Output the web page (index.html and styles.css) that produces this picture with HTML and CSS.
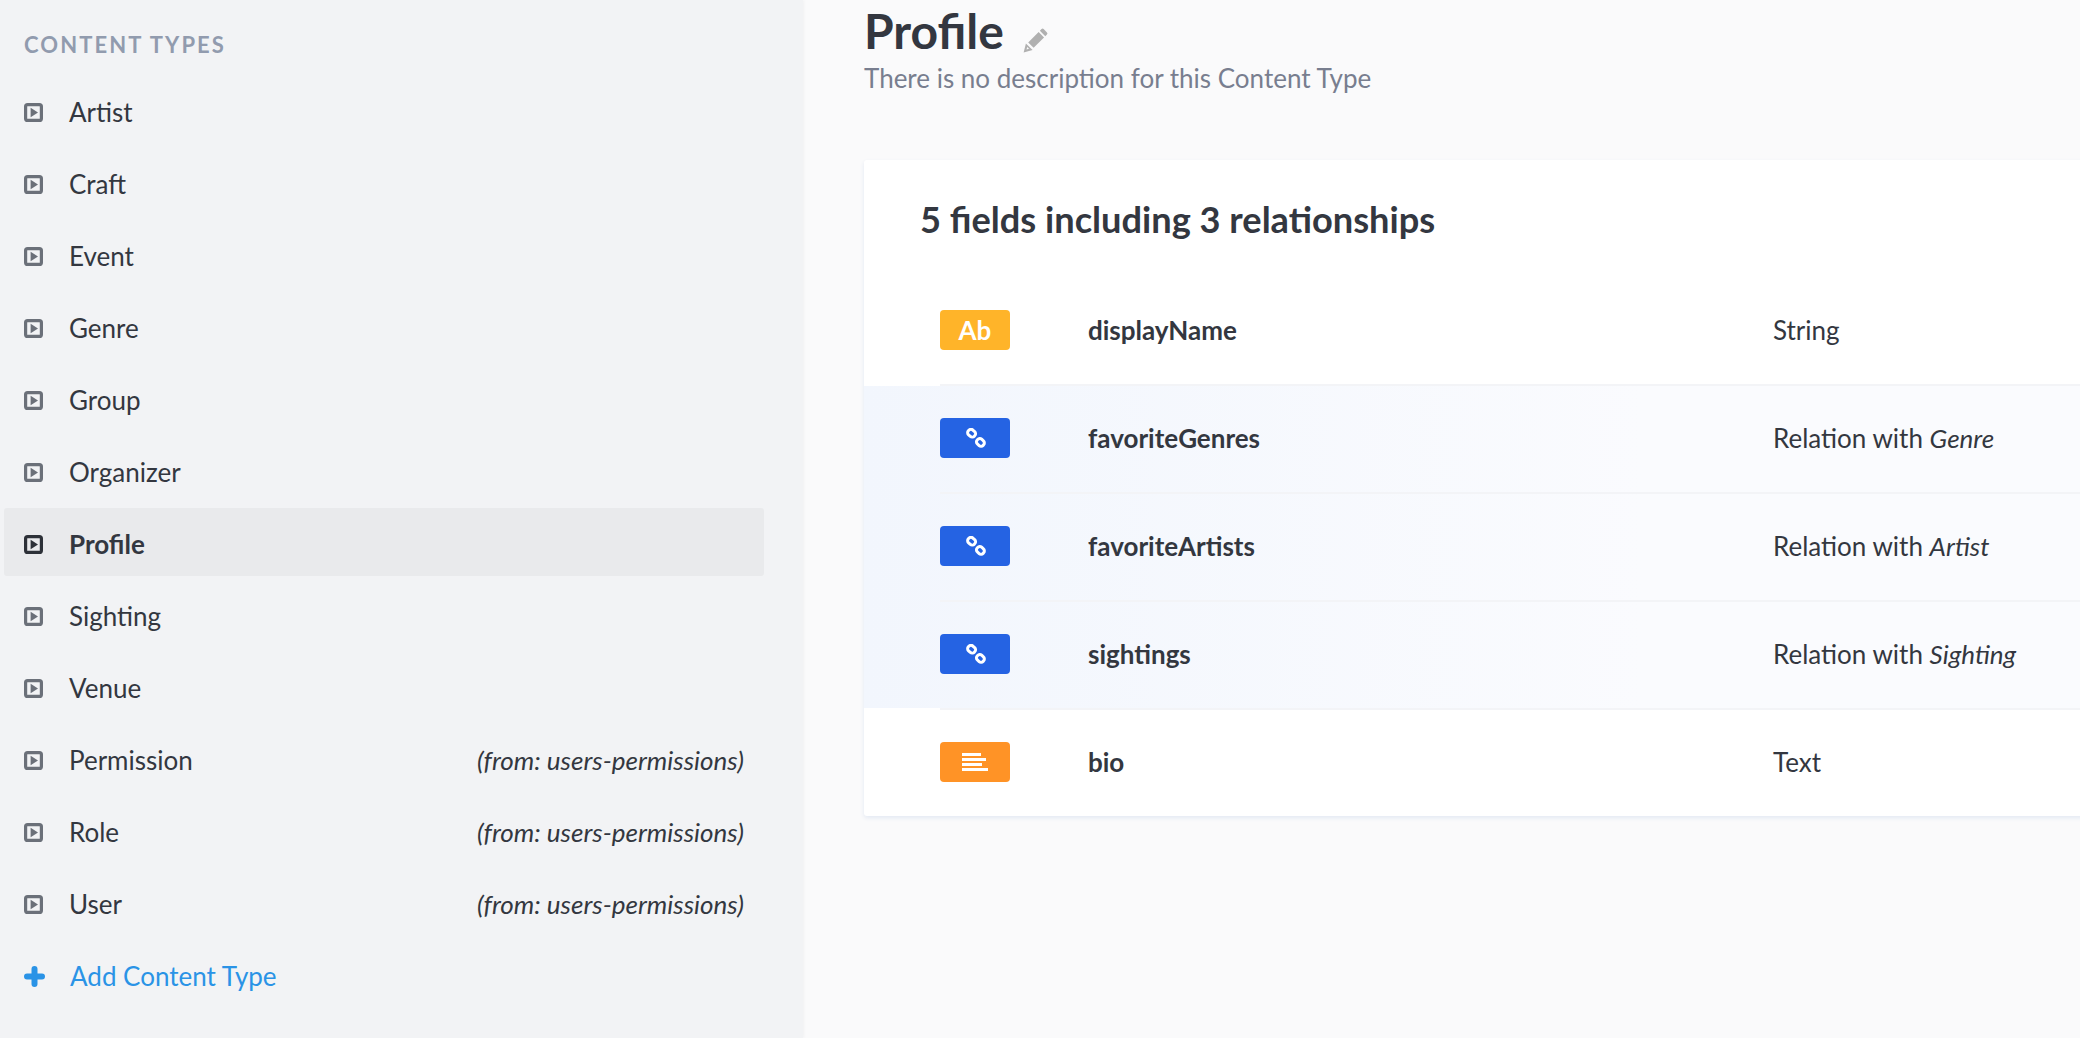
FILE: index.html
```html
<!DOCTYPE html>
<html lang="en">
<head>
    <meta charset="UTF-8">
    <title>Content Types - Profile</title>
    <link rel="stylesheet" href="styles.css">
</head>
<body>
    <svg class="sprites" width="0" height="0">
        <symbol id="ico-type" viewBox="0 0 19 19">
            <rect x="1.6" y="1.6" width="15.8" height="15.8" rx="2" fill="none" stroke="currentColor" stroke-width="3.2"/>
            <path d="M6.6 4.8 L14 9.5 L6.6 14.2 Z" fill="currentColor"/>
        </symbol>
        <symbol id="ico-link" viewBox="0 0 20 20">
            <g fill="none" stroke="#fff" stroke-width="3">
                <rect x="1.6" y="2" width="8" height="6.4" rx="2.8" transform="rotate(42 5.6 5.2)"/>
                <rect x="10.4" y="11.2" width="8" height="6.4" rx="2.8" transform="rotate(42 14.4 14.4)"/>
            </g>
        </symbol>
    </svg>

    <aside class="sidebar">
        <h2 class="sidebar-title">CONTENT TYPES</h2>
        <ul class="type-list">
            <li class="type-item"><svg class="type-ico"><use href="#ico-type"/></svg><span>Artist</span></li>
            <li class="type-item"><svg class="type-ico"><use href="#ico-type"/></svg><span>Craft</span></li>
            <li class="type-item"><svg class="type-ico"><use href="#ico-type"/></svg><span>Event</span></li>
            <li class="type-item"><svg class="type-ico"><use href="#ico-type"/></svg><span>Genre</span></li>
            <li class="type-item"><svg class="type-ico"><use href="#ico-type"/></svg><span>Group</span></li>
            <li class="type-item"><svg class="type-ico"><use href="#ico-type"/></svg><span>Organizer</span></li>
            <li class="type-item active"><svg class="type-ico"><use href="#ico-type"/></svg><span>Profile</span></li>
            <li class="type-item"><svg class="type-ico"><use href="#ico-type"/></svg><span>Sighting</span></li>
            <li class="type-item"><svg class="type-ico"><use href="#ico-type"/></svg><span>Venue</span></li>
            <li class="type-item"><svg class="type-ico"><use href="#ico-type"/></svg><span>Permission</span><em>(from: users-permissions)</em></li>
            <li class="type-item"><svg class="type-ico"><use href="#ico-type"/></svg><span>Role</span><em>(from: users-permissions)</em></li>
            <li class="type-item"><svg class="type-ico"><use href="#ico-type"/></svg><span>User</span><em>(from: users-permissions)</em></li>
            <li class="type-item add-item">
                <svg class="add-ico" viewBox="0 0 21 21"><path d="M10.5 3 V18 M3 10.5 H18" stroke="currentColor" stroke-width="6" stroke-linecap="round" fill="none"/></svg>
                <span>Add Content Type</span>
            </li>
        </ul>
    </aside>

    <main class="main">
        <div class="page-head">
            <h1>Profile
                <svg class="edit-ico" viewBox="0 0 24 24">
                    <path d="M5 13.8 L15 3.8 L20.2 9 L10.2 19 Z M16.2 2.6 L17.8 1 Q18.8 0 19.8 1 L23 4.2 Q24 5.2 23 6.2 L21.4 7.8 Z" fill="#b0b0b0"/>
                    <path d="M0.6 23.4 L2.8 14.8 L9.2 21.2 Z M3.4 20.6 L5.8 20 L4 18.2 Z" fill="#b0b0b0" fill-rule="evenodd"/>
                </svg>
            </h1>
            <p>There is no description for this Content Type</p>
        </div>

        <section class="card">
            <h3>5 fields including 3 relationships</h3>

            <div class="field-row">
                <div class="badge badge-string">Ab</div>
                <div class="field-name">displayName</div>
                <div class="field-type">String</div>
            </div>
            <div class="field-row relation">
                <div class="badge badge-relation"><svg class="link-ico"><use href="#ico-link"/></svg></div>
                <div class="field-name">favoriteGenres</div>
                <div class="field-type">Relation with <em>Genre</em></div>
            </div>
            <div class="field-row relation">
                <div class="badge badge-relation"><svg class="link-ico"><use href="#ico-link"/></svg></div>
                <div class="field-name">favoriteArtists</div>
                <div class="field-type">Relation with <em>Artist</em></div>
            </div>
            <div class="field-row relation">
                <div class="badge badge-relation"><svg class="link-ico"><use href="#ico-link"/></svg></div>
                <div class="field-name">sightings</div>
                <div class="field-type">Relation with <em>Sighting</em></div>
            </div>
            <div class="field-row">
                <div class="badge badge-text">
                    <div class="text-lines"><i class="l1"></i><i class="l2"></i><i class="l3"></i><i class="l4"></i></div>
                </div>
                <div class="field-name">bio</div>
                <div class="field-type">Text</div>
            </div>
        </section>
    </main>
</body>
</html>
```

FILE: styles.css
```css
* {
    box-sizing: border-box;
}

html, body {
    height: 100%;
}

body {
    margin: 0;
    display: flex;
    overflow: hidden;
    font-family: Lato, 'Open Sans', sans-serif;
    color: #333740;
    background: #fafafb;
}

.sprites {
    position: absolute;
}

/* Sidebar */
.sidebar {
    flex: 0 0 803px;
    padding: 33px 39px 0 4px;
    background: #f2f3f5;
    box-shadow: 1px 0 3px rgba(0,0,0,0.04);
}

.sidebar-title {
    margin: 0 0 19px 20px;
    font-size: 22px;
    line-height: 24px;
    font-weight: 700;
    letter-spacing: 2.1px;
    color: #919bae;
}

.type-list {
    margin: 0;
    padding: 0;
    list-style: none;
}

.type-item {
    display: flex;
    align-items: center;
    height: 68px;
    margin-bottom: 4px;
    padding: 4px 20px 0;
    border-radius: 3px;
    font-size: 26px;
    color: #333740;
}

.type-item span {
    flex: 1;
}

.type-item em {
    font-size: 26px;
}

.type-item.active {
    background: #e9eaec;
    font-weight: 700;
}

.type-ico {
    width: 19px;
    height: 19px;
    margin-right: 26px;
    color: #6b7079;
}

.active .type-ico {
    color: #2d3138;
}

.add-item {
    color: #2a93e6;
}

.add-ico {
    width: 21px;
    height: 21px;
    margin-right: 25px;
}

/* Main column */
.main {
    flex: 1;
    min-width: 0;
    padding: 0 0 0 61px;
}

.page-head {
    height: 160px;
    padding-top: 3px;
}

.page-head h1 {
    margin: 0;
    font-size: 48px;
    line-height: 55px;
    font-weight: 700;
}

.edit-ico {
    width: 25px;
    height: 25px;
    margin-left: 7px;
    vertical-align: -4px;
}

.page-head p {
    margin: 4px 0 0;
    font-size: 26px;
    line-height: 32px;
    color: #787e8f;
}

.card {
    width: 1300px;
    height: 656px;
    background: #fff;
    border-radius: 3px 0 0 3px;
    box-shadow: 0 2px 4px #e3e9f3;
}

.card h3 {
    margin: 0;
    height: 116px;
    padding: 0 0 0 56px;
    font-size: 36.2px;
    line-height: 118px;
    font-weight: 700;
}

.field-row {
    display: flex;
    align-items: center;
    height: 108px;
    padding-left: 76px;
    font-size: 26px;
    position: relative;
}

.field-row.relation {
    background: linear-gradient(90deg, #f2f6fd 0%, #fafbfe 60%);
}

/* divider sits on top of the next row and starts at the badge */
.field-row::after {
    content: "";
    position: absolute;
    left: 76px;
    right: 0;
    bottom: -2px;
    height: 2px;
    background: #f3f4f7;
    z-index: 1;
}

.field-row:first-of-type::before {
    content: "";
    position: absolute;
    left: 0;
    bottom: -2px;
    width: 76px;
    height: 2px;
    background: #fff;
    z-index: 1;
}

.field-row:last-child::after {
    display: none;
}

.badge {
    display: flex;
    align-items: center;
    justify-content: center;
    flex: 0 0 70px;
    height: 40px;
    margin-right: 78px;
    border-radius: 4px;
    color: #fff;
    font-size: 26px;
    font-weight: 700;
}

.badge-string {
    background: #ffb429;
}

.badge-relation {
    background: #2563e3;
}

.badge-text {
    background: #ff9326;
}

.link-ico {
    width: 20px;
    height: 20px;
    margin-left: 2px;
}

.text-lines {
    display: flex;
    flex-direction: column;
    gap: 2px;
    width: 26px;
}

.text-lines i {
    display: block;
    height: 3px;
    background: #fff;
}

.text-lines .l1 { width: 19px; }
.text-lines .l2 { width: 24px; }
.text-lines .l3 { width: 20px; }
.text-lines .l4 { width: 26px; }

.field-name {
    flex: 0 0 685px;
    font-weight: 700;
}
```
